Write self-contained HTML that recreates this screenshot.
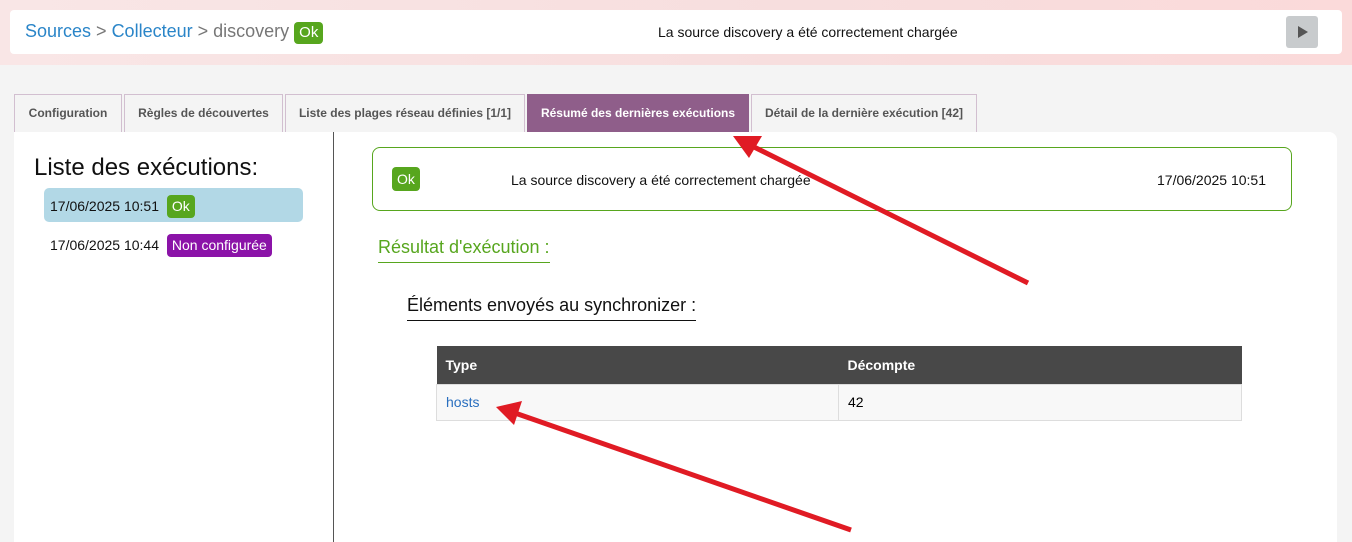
<!DOCTYPE html>
<html><head><meta charset="utf-8"><style>
*{box-sizing:border-box;margin:0;padding:0}
body{width:1352px;height:542px;overflow:hidden;background:#f4f4f4;font-family:"Liberation Sans",sans-serif;position:relative}
.hdr{position:absolute;left:0;top:0;width:1352px;height:65px;background:linear-gradient(90deg,#f9e6e6,#f7dede 60%,#fbdada);}
.bar{position:absolute;left:10px;top:10px;width:1332px;height:44px;background:#fff;border-radius:4px}
.bc{position:absolute;left:15px;top:11px;font-size:18px;color:#777}
.bc a{color:#2a85c8;text-decoration:none}
.ok{display:inline-block;background:#57a61e;color:#fff;border-radius:4px;padding:2px 4px;font-size:15px}
.msg{position:absolute;left:648px;top:14px;font-size:14px;color:#111}
.play{position:absolute;left:1276px;top:6px;width:32px;height:32px;background:#c8cbcd;border-radius:3px}
.play:after{content:"";position:absolute;left:12px;top:10px;border-left:10px solid #555;border-top:6px solid transparent;border-bottom:6px solid transparent}
.tab{position:absolute;top:94px;height:38px;border:1px solid #d2bfd0;border-bottom:none;background:#f4f4f4;font-size:12px;font-weight:bold;color:#555;text-align:center;line-height:36px}
.tab.act{background:#8f5e8a;color:#fff;border-color:#8f5e8a}
.left{position:absolute;left:14px;top:132px;width:320px;height:410px;background:#fff;border-right:1px solid #555}
.main{position:absolute;left:334px;top:132px;width:1003px;height:410px;background:#fff;border-top-right-radius:8px}
</style></head><body>
<div class="hdr"><div class="bar">
<div class="bc"><a>Sources</a> &gt; <a>Collecteur</a> &gt; discovery <span class="ok" style="padding:2px 5px 3px">Ok</span></div>
<div class="msg">La source discovery a été correctement chargée</div>
<div class="play"></div>
</div></div>
<div class="tab" style="left:14px;width:108px">Configuration</div>
<div class="tab" style="left:124px;width:159px">Règles de découvertes</div>
<div class="tab" style="left:285px;width:240px">Liste des plages réseau définies [1/1]</div>
<div class="tab act" style="left:527px;width:222px">Résumé des dernières exécutions</div>
<div class="tab" style="left:751px;width:226px">Détail de la dernière exécution [42]</div>
<div class="left">
<div style="position:absolute;left:20px;top:22px;font-size:24px;color:#111">Liste des exécutions:</div>
<div style="position:absolute;left:30px;top:56px;width:259px;height:34px;background:#b2d8e6;border-radius:5px"></div>
<div style="position:absolute;left:36px;top:63px;font-size:14px;color:#111;line-height:16px">17/06/2025 10:51 <span class="ok" style="font-size:14px;margin-left:4px;padding:3px 5px 4px">Ok</span></div>
<div style="position:absolute;left:36px;top:102px;font-size:14px;color:#111;line-height:16px">17/06/2025 10:44 <span class="ok" style="font-size:14px;margin-left:4px;background:#8b13a8;padding:3px 5px 4px">Non configurée</span></div>
</div>
<div class="main">
<div style="position:absolute;left:38px;top:15px;width:920px;height:64px;border:1px solid #57a61e;border-radius:8px">
<span class="ok" style="position:absolute;left:19px;top:19px;font-size:14px;padding:4px 5px">Ok</span>
<div style="position:absolute;left:138px;top:24px;font-size:14px;color:#111">La source discovery a été correctement chargée</div>
<div style="position:absolute;right:25px;top:24px;font-size:14px;color:#111">17/06/2025 10:51</div>
</div>
<div style="position:absolute;left:44px;top:105px;font-size:18px;color:#57a61e;border-bottom:1px solid #57a61e;padding-bottom:4px">Résultat d'exécution :</div>
<div style="position:absolute;left:73px;top:163px;font-size:18px;color:#111;border-bottom:1px solid #111;padding-bottom:4px">Éléments envoyés au synchronizer :</div>
<table style="position:absolute;left:102px;top:214px;width:806px;border-collapse:collapse;font-size:14px">
<tr style="background:#484848;color:#fff;height:38px"><th style="text-align:left;padding-left:9px;width:402px">Type</th><th style="text-align:left;padding-left:9px">Décompte</th></tr>
<tr style="background:#f8f8f8;height:36px"><td style="padding-left:9px;color:#2a6fbf;border:1px solid #ddd">hosts</td><td style="padding-left:9px;border:1px solid #ddd">42</td></tr>
</table>
</div>
<svg width="1352" height="542" style="position:absolute;left:0;top:0">
<line x1="1028" y1="283" x2="752" y2="146" stroke="#e01b24" stroke-width="5"/>
<polygon points="733,136 762,136 749,158" fill="#e01b24"/>
<line x1="851" y1="530" x2="515" y2="413" stroke="#e01b24" stroke-width="5"/>
<polygon points="496,407 522,401 514,425" fill="#e01b24"/>
</svg>
</body></html>
